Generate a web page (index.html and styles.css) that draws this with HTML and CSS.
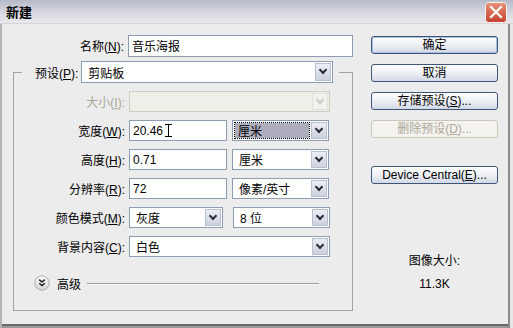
FILE: index.html
```html
<!DOCTYPE html>
<html lang="zh-CN">
<head>
    <meta charset="UTF-8">
    <title>新建</title>
    <link rel="stylesheet" href="styles.css">
</head>
<body>
    <div class="window">
        <div class="titlebar">
            <span class="title">新建</span>
            <span class="close">
                <svg width="22" height="21" viewBox="0 0 22 21">
                    <defs>
                        <linearGradient id="red" x1="0" y1="0" x2="0" y2="1">
                            <stop offset="0" stop-color="#e9907a"/>
                            <stop offset="1" stop-color="#c2422c"/>
                        </linearGradient>
                    </defs>
                    <rect x="0.5" y="0.5" width="21" height="20" rx="3" fill="url(#red)" stroke="#f4f4f4"/>
                    <path d="M6 5 L16 15 M16 5 L6 15" stroke="#fff" stroke-width="2.2" stroke-linecap="square"/>
                </svg>
            </span>
        </div>

        <div class="content">
            <div class="main">
                <div class="row">
                    <label class="lbl lbl-top">名称(<u>N</u>):</label>
                    <div class="field name-field">音乐海报</div>
                </div>

                <fieldset class="group">
                    <legend class="preset">
                        <label class="preset-lbl">预设(<u>P</u>):</label>
                        <div class="select preset-select">剪贴板<span class="arrow"></span></div>
                    </legend>

                    <div class="row">
                        <label class="lbl disabled">大小(<u>I</u>):</label>
                        <div class="select off wide-select"><span class="arrow"></span></div>
                    </div>
                    <div class="row">
                        <label class="lbl">宽度(<u>W</u>):</label>
                        <div class="field num">20.46 <span class="caret"></span></div>
                        <div class="select unit focus"><span class="focus-box">厘米</span><span class="arrow"></span></div>
                    </div>
                    <div class="row">
                        <label class="lbl">高度(<u>H</u>):</label>
                        <div class="field num">0.71</div>
                        <div class="select unit">厘米<span class="arrow"></span></div>
                    </div>
                    <div class="row">
                        <label class="lbl">分辨率(<u>R</u>):</label>
                        <div class="field num">72</div>
                        <div class="select unit">像素/英寸<span class="arrow"></span></div>
                    </div>
                    <div class="row">
                        <label class="lbl">颜色模式(<u>M</u>):</label>
                        <div class="select mode">灰度<span class="arrow"></span></div>
                        <div class="select unit bits">8 位<span class="arrow"></span></div>
                    </div>
                    <div class="row">
                        <label class="lbl">背景内容(<u>C</u>):</label>
                        <div class="select wide-select">白色<span class="arrow"></span></div>
                    </div>

                    <div class="advanced">
                        <svg class="adv-icon" width="16" height="16" viewBox="0 0 16 16">
                            <defs>
                                <linearGradient id="btn" x1="0" y1="0" x2="0" y2="1">
                                    <stop offset="0" stop-color="#ffffff"/>
                                    <stop offset="1" stop-color="#d4d4d8"/>
                                </linearGradient>
                            </defs>
                            <circle cx="8" cy="8" r="7.2" fill="url(#btn)" stroke="#a9a9b0"/>
                            <path d="M5.2 4.6 L8 7 L10.8 4.6 M5.2 8.2 L8 10.6 L10.8 8.2" stroke="#222" stroke-width="1.5" fill="none"/>
                        </svg>
                        <span class="adv-text">高级</span>
                        <span class="adv-line"></span>
                    </div>
                </fieldset>
            </div>

            <div class="side">
                <button class="btn default">确定</button>
                <button class="btn">取消</button>
                <button class="btn">存储预设(<u>S</u>)...</button>
                <button class="btn" disabled>删除预设(<u>D</u>)...</button>
                <button class="btn device">Device Central(<u>E</u>)...</button>
                <p class="info">图像大小:</p>
                <p class="info size">11.3K</p>
            </div>
        </div>
    </div>
</body>
</html>
```

FILE: styles.css
```css
body {
    margin: 0;
    background: #ececec;
    font-family: "Liberation Sans", "Noto Sans CJK SC", sans-serif;
    font-size: 12px;
    color: #000;
}
.window {
    width: 513px;
    height: 328px;
    background: #ececec;
    box-shadow: inset 2px 0 0 #b4b4b4, inset -3px 0 0 #e6e6e6, inset -5px 0 0 #8c8c8c,
        inset 0 -2px 0 #9a9a9a, inset 0 -4px 0 #6a6a6a;
    overflow: hidden;
}
.titlebar {
    height: 23px;
    border-bottom: 1px solid #d6d6da;
    background: linear-gradient(#b7bbc8, #d6d8e0 55%, #e8e8ec);
    display: flex;
    align-items: center;
    justify-content: space-between;
    padding: 0 6px 0 6px;
}
.title {
    font-weight: bold;
    font-size: 13px;
    font-family: "Noto Sans CJK SC", sans-serif;
}
.close {
    display: flex;
    margin-top: 1px;
}
.content {
    display: flex;
}
.main {
    width: 340px;
    padding: 11px 0 0 13px;
}
.row {
    display: flex;
    align-items: center;
    height: 21px;
    margin-top: 8px;
}
.main > .row {
    margin-top: 0;
}
.lbl {
    width: 111px;
    margin-right: 4px;
    text-align: right;
    white-space: nowrap;
}
.lbl-top {
    width: 112px;
}
.disabled {
    color: #aca899;
}
.field, .select {
    box-sizing: border-box;
    height: 21px;
    border: 1px solid #8d9cb0;
    background: #fff;
    padding-left: 3px;
    display: flex;
    align-items: center;
    position: relative;
    white-space: nowrap;
}
.name-field {
    width: 227px;
    height: 22px;
}
.num {
    width: 98px;
}
.caret {
    display: inline-block;
    width: 5px;
    height: 13px;
    margin-left: 5px;
    border-left: 1px solid #000;
    position: relative;
}
.caret::before, .caret::after {
    content: "";
    position: absolute;
    left: -4px;
    width: 7px;
    border-top: 1px solid #000;
}
.caret::before { top: 0; }
.caret::after { bottom: 0; }
.select {
    padding-left: 6px;
}
.arrow {
    position: absolute;
    right: 1px;
    top: 1px;
    bottom: 1px;
    width: 16px;
    background: linear-gradient(#eef0f6, #c9cfdc);
    box-shadow: inset 0 0 0 1px #b9c1d0;
}
.arrow::after {
    content: "";
    position: absolute;
    left: 5px;
    top: 4px;
    width: 4px;
    height: 4px;
    border-right: 2px solid #2c2c38;
    border-bottom: 2px solid #2c2c38;
    transform: rotate(45deg);
}
.unit {
    width: 97px;
    margin-left: 5px;
}
.bits {
    margin-left: 10px;
}
.mode {
    width: 94px;
}
.wide-select {
    width: 201px;
}
.off {
    background: #efefea;
    border-color: #cfcdc0;
}
.off .arrow {
    background: #f1f1ee;
    box-shadow: inset 0 0 0 1px #e0e0da;
}
.off .arrow::after {
    border-color: #c8c8cc;
}
.focus {
    padding: 2px;
}
.focus-box {
    flex: 1;
    height: 15px;
    margin-right: 17px;
    background: #adadbe;
    outline: 1px dotted #000;
    padding-left: 3px;
    display: flex;
    align-items: center;
}
.group {
    box-sizing: border-box;
    width: 340px;
    margin: 5px 0 0 0;
    padding: 0 0 18px 0;
    border: 1px solid #a2a2a2;
    min-width: 0;
}
.preset {
    margin-left: 8px;
    padding: 0 6px 0 13px;
    display: flex;
    align-items: center;
}
.preset-lbl {
    margin-right: 3px;
}
.preset-select {
    width: 252px;
    height: 22px;
}
.advanced {
    display: flex;
    align-items: center;
    height: 18px;
    margin-top: 17px;
    padding-left: 20px;
}
.adv-text {
    margin-left: 7px;
}
.adv-line {
    flex: 1;
    height: 0;
    border-top: 1px solid #9c9c9c;
    border-bottom: 1px solid #fafafa;
    margin: 1px 33px 0 6px;
}
.side {
    width: 127px;
    margin-left: 18px;
    padding-top: 12px;
    display: flex;
    flex-direction: column;
}
.btn {
    height: 18px;
    margin: 0 0 10px 0;
    padding: 0;
    border: 1px solid #3f5577;
    border-radius: 3px;
    background: linear-gradient(#ffffff, #eef0f5 50%, #d2d8e6);
    font-family: "Liberation Sans", "Noto Sans CJK SC", sans-serif;
    font-size: 12px;
    color: #000;
    line-height: 14px;
}
.default {
    box-shadow: inset 0 0 0 1px #a8c0e4;
}
.btn:disabled {
    border-color: #c9c7ba;
    background: #f4f3ef;
    color: #aca899;
}
.device {
    margin-top: 18px;
}
.info {
    margin: 0;
    text-align: center;
    line-height: 14px;
    margin-top: 60px;
}
.size {
    margin-top: 9px;
}
```
